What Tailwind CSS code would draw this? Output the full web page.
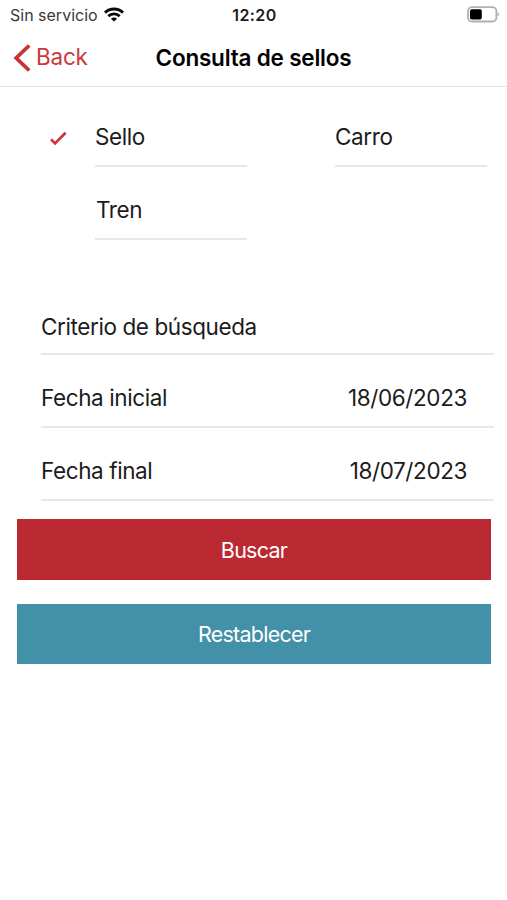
<!DOCTYPE html>
<html lang="es">
<head>
<meta charset="utf-8">
<title>Consulta de sellos</title>
<script src="https://cdn.jsdelivr.net/npm/@tailwindcss/browser@4"></script>
</head>
<body class="bg-white font-['Inter','Liberation_Sans',sans-serif] text-[#1c1c1c]">
<div class="flex h-[900px] w-[507px] flex-col overflow-hidden">
  <header class="h-[87px] shrink-0 border-b border-[#e4e4e4]">
    <div class="grid h-[29px] grid-cols-3 items-center pr-[8px] pl-[10px]">
      <div class="flex items-center gap-[6px] pt-px text-[16px] leading-[28px] whitespace-nowrap text-[#3a3a3a]">
        <span>Sin servicio</span>
        <svg class="relative -top-px h-[15px] w-[20px] shrink-0" viewBox="0 0 20 15" fill="none" stroke="#0a0a0a" stroke-width="2.9">
          <path d="M1 5.6C6 .8 14 .8 19 5.6"/>
          <path d="M4.3 9.1C7.6 6.1 12.4 6.1 15.7 9.1"/>
          <path d="M10 14.6 6.9 11.7C8.6 10.1 11.4 10.1 13.1 11.7Z" fill="#0a0a0a" stroke="none"/>
        </svg>
      </div>
      <div class="text-center text-[16px] font-semibold tracking-[0.4px]">12:20</div>
      <svg class="h-[17px] w-[33px] justify-self-end" viewBox="0 0 33 17">
        <rect x="2" y="1.2" width="28.4" height="14.3" rx="4" fill="none" stroke="#b0b0b0" stroke-width="1.8"/>
        <rect x="4" y="3.2" width="11.8" height="10.4" rx="1.8" fill="#000"/>
        <path d="M31.4 6.2c2 .6 2 3.6 0 4.2z" fill="#b0b0b0"/>
      </svg>
    </div>
    <nav class="grid h-[57px] grid-cols-[1fr_auto_1fr] items-center px-[13px]">
      <div class="flex items-center gap-[5px] text-[22.5px] tracking-[-0.2px] text-[#c93a3c]">
        <svg class="h-[30px] w-[18px]" viewBox="0 0 18 30" fill="none" stroke="#c93335" stroke-width="3.8"><path d="M16.2 2.5 3.2 15 16.2 27.5"/></svg>
        <span class="relative -top-px">Back</span>
      </div>
      <h1 class="text-[22.5px] font-semibold tracking-[-0.2px] text-black">Consulta de sellos</h1>
    </nav>
  </header>

  <main class="text-[22.5px] leading-[28px] tracking-[-0.4px]">
    <section class="grid grid-cols-[152px_152px] gap-x-[88px] pt-[7px] pl-[95px]">
      <div class="relative flex h-[73px] items-end border-b-2 border-[#e8e8e8] pb-[14px]">
        <svg class="absolute top-[37px] left-[-46px] h-[16px] w-[19px]" viewBox="0 0 19 16" fill="none" stroke="#cc3436" stroke-width="2.7"><path d="M2 8.4 6 12.4 16.6 1.8"/></svg>
        <span>Sello</span>
      </div>
      <div class="flex h-[73px] items-end border-b-2 border-[#e8e8e8] pb-[14px]"><span>Carro</span></div>
      <div class="flex h-[73px] items-end border-b-2 border-[#e8e8e8] pb-[14px] pl-px"><span>Tren</span></div>
    </section>
    <section class="mt-[42px] ml-[41px] w-[453px]">
      <div class="flex h-[73px] items-end border-b-2 border-[#e8e8e8] pb-[12px]"><h2>Criterio de búsqueda</h2></div>
      <div class="flex h-[73px] items-end justify-between border-b-2 border-[#e8e8e8] pr-[27px] pb-[14px]"><span>Fecha inicial</span><span>18/06/2023</span></div>
      <div class="flex h-[73px] items-end justify-between border-b-2 border-[#e8e8e8] pr-[27px] pb-[14px]"><span>Fecha final</span><span>18/07/2023</span></div>
    </section>
    <div class="mt-[18px] ml-[17px] flex w-[474px] flex-col gap-[24px] text-[21.5px] tracking-[-0.75px] text-white">
      <button class="h-[61px] bg-[#bb2932]">Buscar</button>
      <button class="h-[60px] bg-[#4291a8]">Restablecer</button>
    </div>
  </main>
</div>
</body>
</html>
